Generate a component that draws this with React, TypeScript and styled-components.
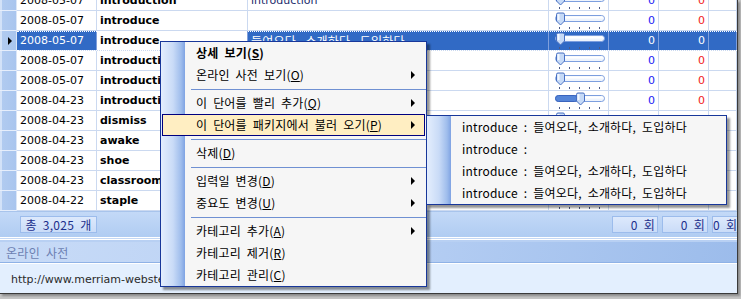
import React from 'react';
import styled, { createGlobalStyle, css } from 'styled-components';

const COLS = '17px 80px 151px 301px 60px 50px 50px 1fr';
const KR = `'Noto Sans CJK KR', 'DejaVu Sans', sans-serif`;
const GRID_FONT = `'DejaVu Sans', 'Noto Sans CJK KR', sans-serif`;

const GlobalStyle = createGlobalStyle`
  html, body {
    margin: 0;
    padding: 0;
  }
  body {
    background: #c2c2c2;
    font-family: ${GRID_FONT};
  }
`;

const Frame = styled.div`
  width: 741px;
  height: 299px;
  background: #c4c4c4;
  overflow: hidden;
`;

const Window = styled.div`
  position: relative;
  box-sizing: border-box;
  width: 738px;
  height: 294px;
  display: flex;
  flex-direction: column;
  background: #fff;
  border-right: 1px solid #3a3a3a;
  border-bottom: 1px solid #3a3a3a;
  box-shadow: 2px 2px 2px rgba(0, 0, 0, .3);
  overflow: hidden;
`;

/* ---------- grid ---------- */

const GridViewport = styled.div`
  height: 211px;
  overflow: hidden;
  border-bottom: 1px solid #a8c4ec;
  flex-shrink: 0;
`;

const GridBody = styled.div`
  margin-top: -9px;
`;

const Row = styled.div<{ $selected?: boolean }>`
  position: relative;
  display: grid;
  grid-template-columns: ${COLS};
  height: 20px;
  ${({ $selected }) => $selected && css`
    &::after {
      content: '';
      position: absolute;
      left: 17px;
      right: 0;
      top: 0;
      bottom: 0;
      border-top: 1px dotted #fff;
      border-bottom: 1px dotted #fff;
      pointer-events: none;
    }
  `}
`;

const Cell = styled.div<{
  $selected?: boolean; $bold?: boolean; $right?: boolean; $color?: string; $kr?: boolean; $plain?: boolean;
}>`
  box-sizing: border-box;
  height: 20px;
  display: flex;
  align-items: center;
  justify-content: ${({ $right }) => ($right ? 'flex-end' : 'flex-start')};
  padding: ${({ $right }) => ($right ? '0 3px 0 0' : '0 0 0 3px')};
  border-right: 1px solid ${({ $selected }) => ($selected ? '#7f9fdc' : '#cbd9f0')};
  border-bottom: 1px solid #cbd9f0;
  font-family: ${({ $kr }) => ($kr ? KR : GRID_FONT)};
  font-size: ${({ $kr }) => ($kr ? '12px' : '11px')};
  letter-spacing: ${({ $kr }) => ($kr ? '0.2px' : '0')};
  word-spacing: ${({ $kr }) => ($kr ? '3px' : '0')};
  font-weight: ${({ $bold }) => ($bold ? 700 : 400)};
  white-space: nowrap;
  overflow: hidden;
  color: ${({ $selected, $color, $plain }) => {
    if ($selected && !$plain) return '#fff';
    return $color || '#000';
  }};
  background: ${({ $selected, $plain }) => ($selected && !$plain ? '#316ac5' : '#fff')};
`;

const HeaderCell = styled.div`
  box-sizing: border-box;
  height: 20px;
  display: flex;
  align-items: center;
  padding-left: 8px;
  background: linear-gradient(to right, #d3e2f8 0, #d3e2f8 2px, #b1cbf0 2px, #a9c5ee 100%);
  border-bottom: 1px solid #e6eefb;
  border-right: 1px solid #dbe6f7;
`;

const RowArrow = styled.span`
  width: 0;
  height: 0;
  border-left: 4px solid #000;
  border-top: 4px solid transparent;
  border-bottom: 4px solid transparent;
`;

const SliderCell = styled.div<{ $selected?: boolean }>`
  box-sizing: border-box;
  height: 20px;
  border-right: 1px solid ${({ $selected }) => ($selected ? '#7f9fdc' : '#cbd9f0')};
  border-bottom: 1px solid #cbd9f0;
  background: ${({ $selected }) => ($selected ? '#316ac5' : '#fff')};
  svg { display: block; }
`;

const Slider = ({ pos }: { pos: number }) => {
  const x = 7 + pos * 10;
  return (
    <svg width="59" height="19" viewBox="0 0 59 19">
      <rect x="6.5" y="4.5" width="49" height="6" rx="3" fill="#eef4fd" stroke="#7c9ede" />
      <rect x="7.5" y="5.5" width="47" height="2" rx="1" fill="#ffffff" />
      {pos > 0 && (
        <rect x="6.5" y="4.5" width={x - 5} height="6" rx="3" fill="#5585d8" stroke="#3a64bd" />
      )}
      <path
        d={`M${x + 0.5} 3.5 q0 -1.5 1.5 -1.5 h5 q1.5 0 1.5 1.5 v6.5 l-4 4 l-4 -4 z`}
        fill="#c6daf7"
        stroke="#4870c2"
      />
      <rect x={x + 1.5} y="3" width="2" height="6" fill="#ffffff" opacity=".8" />
      {[10, 20, 30, 40, 50].map((t) => (
        <rect key={t} x={t} y="16" width="1" height="2" fill="#4a5a86" />
      ))}
    </svg>
  );
};

/* ---------- status + panel ---------- */

const StatusBar = styled.div`
  display: grid;
  grid-template-columns: ${COLS};
  align-items: center;
  height: 25px;
  flex-shrink: 0;
  background: linear-gradient(#c3d9f7, #b0ccf2);
`;

const StatusBox = styled.div<{ $span?: boolean }>`
  box-sizing: border-box;
  height: 17px;
  display: flex;
  align-items: center;
  justify-content: ${({ $span }) => ($span ? 'center' : 'flex-end')};
  grid-column: ${({ $span }) => ($span ? '1 / 3' : 'auto')};
  margin: ${({ $span }) => ($span ? '0 0 0 20px' : '0 1px 0 3px')};
  padding-right: ${({ $span }) => ($span ? '0' : '2px')};
  border: 1px solid #9cbcec;
  background: linear-gradient(#dde9fc, #cadcf8);
  font-family: ${KR};
  font-size: 12px;
  letter-spacing: 0.3px;
  word-spacing: 3px;
  color: #1c2f8c;
  white-space: nowrap;
`;

const Divider = styled.div`
  height: 5px;
  flex-shrink: 0;
  background: linear-gradient(#fff 0 1px, #c4d8f5 1px 2px, #fff 2px 3px, #b8d0f3 3px 5px);
`;

const PanelHeader = styled.div`
  box-sizing: border-box;
  height: 21px;
  flex-shrink: 0;
  display: flex;
  align-items: center;
  padding-left: 6px;
  background: linear-gradient(100deg, #c8dbf7 0%, #b5cef3 55%, #9cbceb 100%);
  border-bottom: 1px solid #8fb2e6;
  font-family: ${KR};
  font-size: 12px;
  letter-spacing: 0.3px;
  word-spacing: 3px;
  color: #6c7fb2;
`;

const PanelBody = styled.div`
  flex: 1;
  display: flex;
  align-items: center;
  padding: 2px 0 0 11px;
  background: #e3effe;
  border-top: 1px solid #fff;
  font-family: ${GRID_FONT};
  font-size: 11px;
  color: #2a2a2a;
  white-space: nowrap;
`;

/* ---------- context menu ---------- */

const STRIP = 'linear-gradient(to right, #e4eefd 0px, #c9dbf7 12px, #9fbdec 20px, #7fa3e3 24px, #f6f6f6 24px)';

const Menu = styled.div<{ $left: number; $top: number; $width: number }>`
  position: absolute;
  left: ${({ $left }) => $left}px;
  top: ${({ $top }) => $top}px;
  width: ${({ $width }) => $width}px;
  box-sizing: border-box;
  border: 1px solid #18379a;
  background: ${STRIP};
  box-shadow: 3px 3px 2px rgba(0, 0, 0, .42);
  font-family: ${KR};
  font-size: 12px;
  letter-spacing: 0.2px;
  word-spacing: 3px;
  color: #000;
  z-index: 2;
`;

const MenuItem = styled.div<{ $active?: boolean; $bold?: boolean; $indent: number }>`
  box-sizing: border-box;
  height: 22px;
  margin: 0 1px;
  display: flex;
  align-items: center;
  padding-left: ${({ $indent }) => $indent}px;
  padding-right: 9px;
  border: 1px solid ${({ $active }) => ($active ? '#000080' : 'transparent')};
  background: ${({ $active }) => ($active ? '#ffeec2' : 'transparent')};
  font-weight: ${({ $bold }) => ($bold ? 700 : 400)};
  white-space: nowrap;
  line-height: 1;
`;

const ItemLabel = styled.span`
  flex: 1;
`;

const SubArrow = styled.span`
  width: 0;
  height: 0;
  border-left: 4px solid #000;
  border-top: 4px solid transparent;
  border-bottom: 4px solid transparent;
`;

const Separator = styled.div`
  height: 6px;
  display: flex;
  align-items: center;
  padding-left: 30px;
  &::before {
    content: '';
    flex: 1;
    height: 1px;
    background: #6f90d2;
  }
`;

type MenuEntry = { sep: true } | {
  sep?: false; label: string; key: string; bold?: boolean; sub?: boolean; active?: boolean;
};

const menuEntries: MenuEntry[] = [
  { label: '상세 보기', key: 'S', bold: true },
  { label: '온라인 사전 보기', key: 'O', sub: true },
  { sep: true },
  { label: '이 단어를 빨리 추가', key: 'Q', sub: true },
  { label: '이 단어를 패키지에서 불러 오기', key: 'P', sub: true, active: true },
  { sep: true },
  { label: '삭제', key: 'D' },
  { sep: true },
  { label: '입력일 변경', key: 'D', sub: true },
  { label: '중요도 변경', key: 'U', sub: true },
  { sep: true },
  { label: '카테고리 추가', key: 'A', sub: true },
  { label: '카테고리 제거', key: 'R' },
  { label: '카테고리 관리', key: 'C' },
];

const subEntries = [
  'introduce : 들여오다, 소개하다, 도입하다',
  'introduce :',
  'introduce : 들여오다, 소개하다, 도입하다',
  'introduce : 들여오다, 소개하다, 도입하다',
];

/* ---------- data ---------- */

interface IWord {
  date: string;
  word: string;
  meaning: string;
  level: number;
  selected?: boolean;
}

// meanings of rows under the menu are hidden, so they are left blank
const words: IWord[] = [
  { date: '2008-05-07', word: 'introduction', meaning: 'introduction', level: 0 },
  { date: '2008-05-07', word: 'introduce', meaning: '', level: 0 },
  { date: '2008-05-07', word: 'introduce', meaning: '들여오다, 소개하다, 도입하다', level: 0, selected: true },
  { date: '2008-05-07', word: 'introduction', meaning: '', level: 0 },
  { date: '2008-05-07', word: 'introduction', meaning: '', level: 0 },
  { date: '2008-04-23', word: 'introduction', meaning: '', level: 2 },
  { date: '2008-04-23', word: 'dismiss', meaning: '', level: 0 },
  { date: '2008-04-23', word: 'awake', meaning: '', level: 0 },
  { date: '2008-04-23', word: 'shoe', meaning: '', level: 0 },
  { date: '2008-04-23', word: 'classroom', meaning: '', level: 0 },
  { date: '2008-04-22', word: 'staple', meaning: '', level: 0 },
];

const App = () => (
  <Frame>
    <GlobalStyle />
    <Window>
      <GridViewport>
        <GridBody>
          {words.map((w, i) => (
            <Row key={`${w.word}-${i}`} $selected={w.selected}>
              <HeaderCell>{w.selected && <RowArrow />}</HeaderCell>
              <Cell $selected={w.selected}>{w.date}</Cell>
              <Cell $selected={w.selected} $plain $bold>{w.word}</Cell>
              <Cell
                $selected={w.selected}
                $kr={/[가-힣]/.test(w.meaning)}
                $color="#1b2b6b"
              >
                {w.meaning}
              </Cell>
              <SliderCell $selected={w.selected}><Slider pos={w.level} /></SliderCell>
              <Cell $selected={w.selected} $right $color="#1c1cf5">0</Cell>
              <Cell $selected={w.selected} $right $color="#f21c1c">0</Cell>
              <Cell $selected={w.selected} />
            </Row>
          ))}
        </GridBody>
      </GridViewport>

      <StatusBar>
        <StatusBox $span>총 3,025 개</StatusBox>
        <span />
        <span />
        <span />
        <StatusBox>0 회</StatusBox>
        <StatusBox>0 회</StatusBox>
        <StatusBox>0 회</StatusBox>
      </StatusBar>
      <Divider />
      <PanelHeader>온라인 사전</PanelHeader>
      <PanelBody>http://www.merriam-webster.com/dictionary/introduce</PanelBody>

      <Menu $left={160} $top={41} $width={267}>
        {menuEntries.map((e, i) => (e.sep ? (
          <Separator key={`sep-${i}`} />
        ) : (
          <MenuItem key={e.label} $active={e.active} $bold={e.bold} $indent={33}>
            <ItemLabel>
              {e.label}
              (
              <u>{e.key}</u>
              )
            </ItemLabel>
            {e.sub && <SubArrow />}
          </MenuItem>
        )))}
      </Menu>

      <Menu $left={426} $top={115} $width={301}>
        {subEntries.map((s, i) => (
          <MenuItem key={`${s}-${i}`} $indent={33}>
            <ItemLabel>{s}</ItemLabel>
          </MenuItem>
        ))}
      </Menu>
    </Window>
  </Frame>
);

export default App;
